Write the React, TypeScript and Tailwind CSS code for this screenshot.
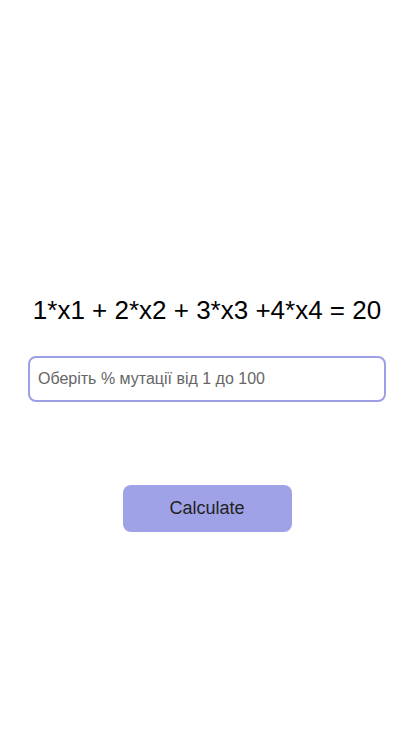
import { useState } from 'react';

export default function App() {
  const [value, setValue] = useState('');

  return (
    <div className="min-h-screen bg-white font-['Liberation_Sans',Arial,sans-serif] text-black">
      <div className="flex flex-col items-center pt-[294px] px-7">
        <h1 className="text-[26px] leading-[32px] font-normal">1*x1 + 2*x2 + 3*x3 +4*x4 = 20</h1>
        <input
          value={value}
          onChange={(e) => setValue(e.target.value)}
          placeholder="Оберіть % мутації від 1 до 100"
          className="mt-[30px] w-full h-[46px] rounded-lg border-2 border-[#9c9fe5] px-2 text-[16px] text-[#333] placeholder:text-[#666] outline-none"
        />
        <button className="mt-[83px] w-[169px] h-[47px] rounded-lg bg-[#9fa2e6] text-[18px] text-[#222]">
          Calculate
        </button>
      </div>
    </div>
  );
}
